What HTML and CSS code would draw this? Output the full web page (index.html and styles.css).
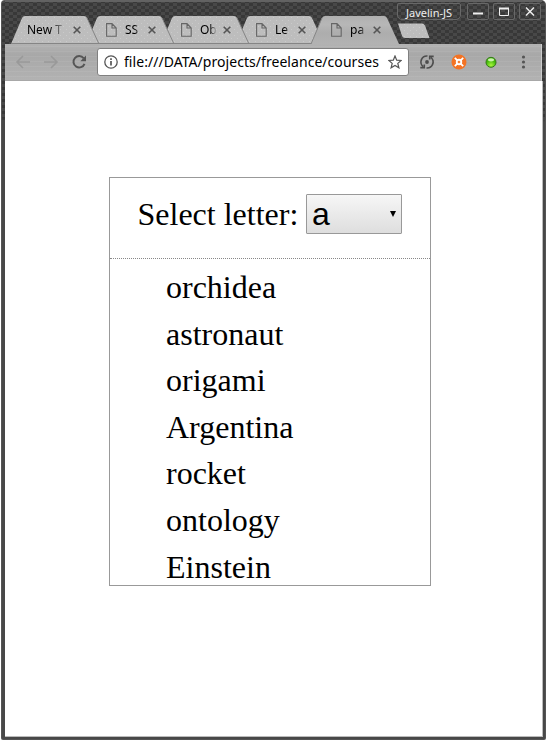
FILE: index.html
```html
<!DOCTYPE html>
<html lang="en">
<head>
<meta charset="utf-8">
<title>Select letter</title>
<link rel="stylesheet" href="styles.css">
</head>
<body>
<svg class="defs" width="0" height="0">
  <defs>
    <pattern id="grain" width="6" height="6" patternUnits="userSpaceOnUse"><rect width="6" height="6" fill="#bdbdbd"/><path d="M1 1h1v1h-1zM4 4h1v1h-1z" fill="#cacaca"/></pattern>
    <linearGradient id="metal" x2="0" y2="1"><stop offset="0" stop-color="#b0b0b0"/><stop offset=".3" stop-color="#b7b7b7"/><stop offset=".6" stop-color="#adadad"/><stop offset="1" stop-color="#b2b2b2"/></linearGradient>
    <radialGradient id="green" cy=".8"><stop offset="0" stop-color="#a8f83c"/><stop offset="1" stop-color="#44b80c"/></radialGradient>
    <symbol id="shape" viewBox="0 0 88 28"><path d="M0 28L11 2Q12 0 14 0H73Q75 0 76 2L88 28z"/></symbol>
    <symbol id="page" viewBox="0 0 11 14"><path d="M.6.6H6L10.2 5V13.3H.6zM6 .8V5H10" fill="none" stroke="#666" stroke-width="1.1"/></symbol>
    <symbol id="close" viewBox="0 0 8 8"><path d="M.7.7L7.3 7.3M7.3.7L.7 7.3" stroke="#555" stroke-width="1.6"/></symbol>
  </defs>
</svg>
<div class="window">
  <header class="frame-top">
    <div class="tabs">
      <div class="tab t1"><svg class="tab-bg" width="88" height="28"><use href="#shape" fill="url(#grain)"/><path d="M0 27.500H88M76 2L88 28" stroke="#858585"/></svg><span class="title wide">New T</span><svg class="x" width="8" height="8"><use href="#close"/></svg></div>
      <div class="tab t2"><svg class="tab-bg" width="88" height="28"><use href="#shape" fill="url(#grain)"/><path d="M0 27.500H88M76 2L88 28" stroke="#858585"/></svg><svg class="page" width="11" height="14"><use href="#page"/></svg><span class="title">SS</span><svg class="x" width="8" height="8"><use href="#close"/></svg></div>
      <div class="tab t3"><svg class="tab-bg" width="88" height="28"><use href="#shape" fill="url(#grain)"/><path d="M0 27.500H88M76 2L88 28" stroke="#858585"/></svg><svg class="page" width="11" height="14"><use href="#page"/></svg><span class="title">Ob</span><svg class="x" width="8" height="8"><use href="#close"/></svg></div>
      <div class="tab t4"><svg class="tab-bg" width="88" height="28"><use href="#shape" fill="url(#grain)"/><path d="M0 27.500H88" stroke="#858585"/></svg><svg class="page" width="11" height="14"><use href="#page"/></svg><span class="title">Le</span><svg class="x" width="8" height="8"><use href="#close"/></svg></div>
      <div class="tab t5"><svg class="tab-bg" width="88" height="28"><use href="#shape" fill="url(#metal)"/><path d="M0 28L11 2" stroke="#858585"/></svg><svg class="page" width="11" height="14"><use href="#page"/></svg><span class="title">pa</span><svg class="x" width="8" height="8"><use href="#close"/></svg></div>
      <svg class="new-tab" width="33" height="16"><path d="M1 .5H25Q27 .5 28 2.500L32.500 15H8Q6 15 5 13z" fill="url(#grain)"/></svg>
    </div>
    <div class="controls">
      <span class="name">Javelin-JS</span>
      <span class="ctl"><svg width="20" height="15"><path d="M5 9.500H15" stroke="#eee" stroke-width="2"/></svg></span>
      <span class="ctl"><svg width="20" height="15"><path d="M5.500 4V11.500H14.500V4" fill="none" stroke="#eee"/><path d="M5 4.500H15" stroke="#eee" stroke-width="2"/></svg></span>
      <span class="ctl"><svg width="20" height="15"><path d="M6 3.500L14 11.500M14 3.500L6 11.500" stroke="#eee" stroke-width="1.500"/></svg></span>
    </div>
  </header>
  <nav class="toolbar">
    <svg class="nav" width="81" height="36" fill="none">
      <path d="M25 18H12M18 12L12 18L18 24M39 18H52M46 12L52 18L46 24" stroke="#999" stroke-width="1.600"/>
      <path d="M78.600 14.200A5.700 5.700 0 1 0 79.500 19.800" stroke="#555" stroke-width="2"/><path d="M81 11.500V17.200H75.300z" fill="#555"/>
    </svg>
    <div class="address">
      <svg width="14" height="14" fill="none"><circle cx="7" cy="7" r="6.200" stroke="#555" stroke-width="1.300"/><path d="M7 6V10.500M7 3.300V5" stroke="#555" stroke-width="1.700"/></svg>
      <span class="url">file:///DATA/projects/freelance/courses</span>
      <svg width="14" height="14"><path d="M7 1L8.700 5.200L13.200 5.500L9.800 8.400L10.900 12.800L7 10.400L3.100 12.800L4.200 8.400L.8 5.500L5.300 5.200z" fill="none" stroke="#555" stroke-width="1.200"/></svg>
    </div>
    <svg class="extensions" width="131" height="36" fill="none">
      <path d="M18.500 12A6 6 0 0 0 14 22.500M17.500 24A6 6 0 0 0 22 13.500M11.300 23.600H15.300V20.500M24.700 12.400H20.700V15.500" stroke="#4d4d4d" stroke-width="1.600"/><circle cx="18" cy="18" r="1.900" fill="#4d4d4d"/>
      <circle cx="50" cy="18" r="7.500" fill="#f37324"/><path d="M45.800 13.800L54.200 22.200M54.200 13.800L45.800 22.200" stroke="#fff" stroke-width="1.800"/><circle cx="50" cy="18" r="3.200" fill="#fff"/><path d="M50 16.400L51.600 18L50 19.600L48.400 18z" fill="#f37324"/>
      <circle cx="82" cy="18.300" r="5" fill="url(#green)" stroke="#347719"/><ellipse cx="82" cy="15.800" rx="3" ry="1.600" fill="#c9f4ac"/>
      <g fill="#555"><circle cx="114.500" cy="13" r="1.600"/><circle cx="114.500" cy="18" r="1.600"/><circle cx="114.500" cy="23" r="1.600"/></g>
    </svg>
  </nav>
  <main class="content">
    <section class="card">
      <div class="chooser"><span>Select letter:</span><div class="select"><span>a</span><svg width="6" height="6"><path d="M0 0H6L3 6z"/></svg></div></div>
      <ul class="words"><li>orchidea</li><li>astronaut</li><li>origami</li><li>Argentina</li><li>rocket</li><li>ontology</li><li>Einstein</li></ul>
    </section>
  </main>
</div>
</body>
</html>
```
FILE: styles.css
```css
* { box-sizing: border-box; }
body { margin: 0; background: #fff; overflow: hidden; }
svg { display: block; flex: none; }
.defs { position: absolute; }
.window {
  width: 545px; height: 740px; margin-left: 1px; padding: 0 4px 4px;
  border-radius: 4px 5px 2px 2px; overflow: hidden;
  background: linear-gradient(#0000 118px, #484848 122px),
    repeating-conic-gradient(#383838 0 25%, #484848 0 50%) 0 0 / 8px 6px;
  box-shadow: inset 0 0 0 1px #555;
}
.frame-top { height: 44px; position: relative; display: flex; align-items: flex-start; box-shadow: inset 0 2px #626262; }
.tabs { display: flex; margin: 16px 0 0 6px; isolation: isolate; }
.tab { position: relative; width: 88px; height: 28px; margin-right: -13px; display: flex; align-items: center; padding-left: 20px; flex: none; }
.t1 { z-index: 4; padding-left: 16px; }
.t2 { z-index: 3; }
.t3 { z-index: 2; }
.t4 { z-index: 1; }
.t5 { z-index: 5; }
.tab-bg { position: absolute; left: 0; top: 0; z-index: -1; }
.title { width: 16px; margin: 0 7px 0 8px; white-space: nowrap; font: 12px/28px "Noto Sans", sans-serif; color: #000; -webkit-mask-image: linear-gradient(90deg, #000 60%, #0002); mask-image: linear-gradient(90deg, #000 60%, #0002); }
.title.wide { width: 38px; margin: 0 8px 0 0; }
.new-tab { margin: 7px 0 0 11px; }
.controls { position: absolute; right: 1px; top: 3px; display: flex; }
.name { width: 64px; height: 17px; margin-right: 6px; border: 1px solid #686868; border-radius: 2px 2px 5px 5px; color: #eee; font: 11px/17px "Noto Sans", sans-serif; text-align: center; }
.ctl { height: 17px; width: 22px; margin-left: 4px; border: 1px solid #686868; border-radius: 2px; }
.name + .ctl { margin-left: 0; }
.toolbar {
  width: 537px; height: 37px; display: flex; align-items: flex-start;
  background: repeating-linear-gradient(#0000 0 2px, #ffffff10 2px 3px, #0000 3px 5px), linear-gradient(#b2b2b2, #a8a8a8 30%, #b2b2b2);
  border-right: 1px solid #ccc; border-bottom: 1px solid #a8a8a8;
}
.nav { margin-right: 11px; overflow: visible; }
.address { width: 312px; height: 28px; margin-top: 4px; padding: 0 6px; display: flex; align-items: center; border: 1px solid #808080; border-radius: 3px; background: #fff; flex: none; }
.url { width: 255px; margin: 0 9px 0 6px; overflow: hidden; white-space: nowrap; font: 14px/26px "Noto Sans", sans-serif; letter-spacing: 0.05px; color: #000; }
.content { width: 538px; height: 656px; background: #fff; border: solid #bbb; border-width: 0 1px 1px 0; padding: 96px 0 0 104px; }
.card { width: 322px; height: 409px; border: 1px solid #999; overflow: hidden; font: 32px/37px "Liberation Serif", serif; color: #000; }
.chooser { height: 81px; border-bottom: 1px dotted #888; padding: 16px 28px 0 27.5px; display: flex; justify-content: space-between; }
.chooser > span { line-height: 40px; }
.select { width: 96px; height: 40px; padding: 0 5px; border: 1px solid #999; border-radius: 1px; background: linear-gradient(#f6f6f6, #dedede); display: flex; align-items: center; justify-content: space-between; font: 32px/40px "Liberation Sans", sans-serif; }
.words { list-style: none; margin: 0; padding: 10px 0 0 56px; }
.words li { margin-bottom: 9.6px; }
```
